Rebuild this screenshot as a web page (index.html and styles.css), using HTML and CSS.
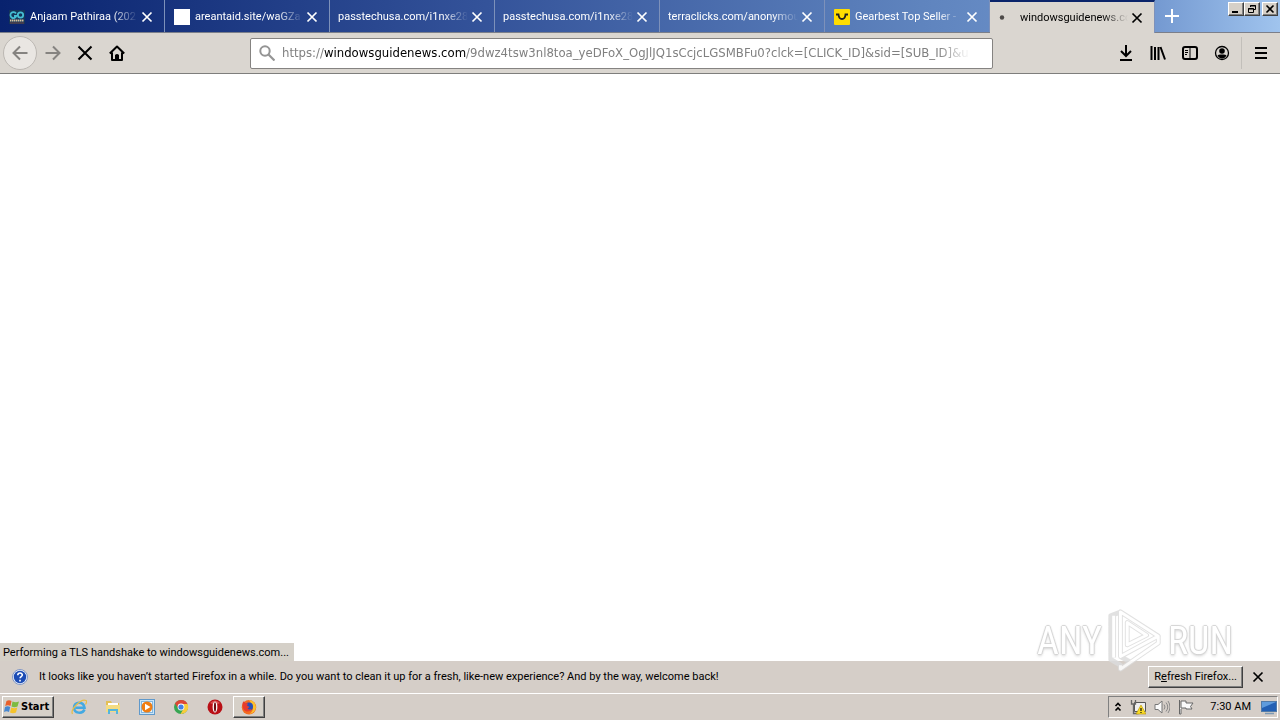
FILE: index.html
```html
<!DOCTYPE html>
<html lang="en">
<head>
<meta charset="utf-8">
<title>windowsguidenews.com</title>
<link rel="stylesheet" href="styles.css">
</head>
<body>
<svg class="defs" aria-hidden="true">
  <symbol id="x" viewBox="0 0 12 12"><path d="M1.500 1.500l9 9M10.500 1.500l-9 9" fill="none" stroke="currentColor" stroke-width="1.700"/></symbol>
</svg>
<header class="tabbar">
  <div class="tab">
    <svg class="favicon" viewBox="0 0 16 16"><rect y="1" width="16" height="14" fill="#143458"/><path d="M7 4.500A3 3 0 1 0 7.300 7H5" fill="none" stroke="#45bdd2" stroke-width="1.800"/><circle cx="11.500" cy="6" r="2.700" fill="none" stroke="#45bdd2" stroke-width="1.800"/><path d="M1 11.500h14" stroke="#d8c2a0" stroke-width="2" stroke-dasharray="1.500 .5"/><path d="M1 14h14" stroke="#704444"/></svg>
    <span class="tab-title">Anjaam Pathiraa (202</span>
    <button class="tab-close" aria-label="Close tab"><svg><use href="#x"/></svg></button>
  </div>
  <div class="tab">
    <svg class="favicon" viewBox="0 0 16 16"><rect width="16" height="16" fill="#fff"/></svg>
    <span class="tab-title">areantaid.site/waGZa</span>
    <button class="tab-close" aria-label="Close tab"><svg><use href="#x"/></svg></button>
  </div>
  <div class="tab">
    <span class="tab-title">passtechusa.com/i1nxe28</span>
    <button class="tab-close" aria-label="Close tab"><svg><use href="#x"/></svg></button>
  </div>
  <div class="tab">
    <span class="tab-title">passtechusa.com/i1nxe28</span>
    <button class="tab-close" aria-label="Close tab"><svg><use href="#x"/></svg></button>
  </div>
  <div class="tab">
    <span class="tab-title">terraclicks.com/anonymou</span>
    <button class="tab-close" aria-label="Close tab"><svg><use href="#x"/></svg></button>
  </div>
  <div class="tab">
    <svg class="favicon" viewBox="0 0 16 16"><rect width="16" height="16" rx="1" fill="#fd0"/><path d="M2 5.500h2.500C5 11.500 11 11.500 11.500 5.500H14" fill="none" stroke="#222" stroke-width="1.800"/></svg>
    <span class="tab-title">Gearbest Top Seller -</span>
    <button class="tab-close" aria-label="Close tab"><svg><use href="#x"/></svg></button>
  </div>
  <div class="tab active">
    <svg class="favicon" viewBox="0 0 16 16"><circle cx="3" cy="7.500" r="2.200" fill="#4d4a48"/></svg>
    <span class="tab-title">windowsguidenews.co</span>
    <button class="tab-close" aria-label="Close tab"><svg><use href="#x"/></svg></button>
  </div>
  <button class="new-tab" aria-label="New tab"><svg viewBox="0 0 14 14"><path d="M7 0v14M0 7h14" stroke="#fff" stroke-width="2"/></svg></button>
  <div class="window-buttons">
    <button aria-label="Minimize"><svg viewBox="0 0 12 10"><path d="M2 8h6" stroke="#000" stroke-width="2"/></svg></button>
    <button aria-label="Restore"><svg viewBox="0 0 12 10"><path d="M4.500 3V1.500h5v4H8M4 2h6M2.500 4.500h5v4h-5zM2 5h6" fill="none" stroke="#000"/></svg></button>
    <button class="close" aria-label="Close"><svg viewBox="0 0 12 10"><path d="M2.500 1.500l7 7M9.500 1.500l-7 7" stroke="#000" stroke-width="1.600"/></svg></button>
  </div>
</header>
<nav class="toolbar">
  <button class="back" aria-label="Back"><svg viewBox="0 0 16 16"><path d="M15.500 8H1.500M8 1.500L1.500 8 8 14.500" fill="none" stroke="#858380" stroke-width="2"/></svg></button>
  <button class="tool" aria-label="Forward"><svg viewBox="0 0 16 16"><path d="M.5 8h14M8 1.500L14.500 8 8 14.500" fill="none" stroke="#858380" stroke-width="2"/></svg></button>
  <button class="tool" aria-label="Stop"><svg viewBox="0 0 16 16"><path d="M1.500 1.500l13 13M14.500 1.500l-13 13" stroke="#000" stroke-width="2"/></svg></button>
  <button class="tool" aria-label="Home"><svg viewBox="0 0 16 16"><path d="M.8 8.500L8 1.500l7.200 7M3 7.500V15h10V7.500" fill="none" stroke="#000" stroke-width="2" stroke-linejoin="round"/><path d="M6 15v-5q2-2 4 0v5z"/></svg></button>
  <div class="urlbar" role="textbox" aria-label="Address" contenteditable="true" spellcheck="false">
    <svg viewBox="0 0 16 16"><circle cx="6" cy="6" r="4.700" fill="none" stroke="#949494" stroke-width="2"/><path d="M9.500 9.500l6 6" stroke="#949494" stroke-width="2.200"/></svg>
    <span class="url">https://<b>windowsguidenews.com</b>/9dwz4tsw3nl8toa_yeDFoX_OgJlJQ1sCcjcLGSMBFu0?clck=[CLICK_ID]&amp;sid=[SUB_ID]&amp;u</span>
  </div>
  <button class="tool" aria-label="Downloads"><svg viewBox="0 0 16 16"><path d="M8 0v11M3 6l5 5 5-5M2 15h12" fill="none" stroke="#000" stroke-width="2"/></svg></button>
  <button class="tool" aria-label="Library"><svg viewBox="0 0 16 16"><path d="M1.500 1v14M5 2v13M8.500 2v13M10.500 2L15 14.500" stroke="#000" stroke-width="2"/></svg></button>
  <button class="tool" aria-label="Sidebars"><svg viewBox="0 0 16 16"><rect x="1" y="2" width="14" height="12" rx="2" fill="none" stroke="#000" stroke-width="2"/><path d="M8 2v12M3 5.500h3M3 7.500h3M3 9.500h2" stroke="#000"/></svg></button>
  <button class="tool" aria-label="Account"><svg viewBox="0 0 16 16"><circle cx="8" cy="8" r="6.500" fill="none" stroke="#000" stroke-width="1.300"/><circle cx="8" cy="6" r="2.800"/><path d="M3.500 10.500q1-1 3-1h3q2 0 3 1Q11 13.500 8 13.500T3.500 10.500"/></svg></button>
  <span class="divider"></span>
  <button class="tool menu" aria-label="Menu"><svg viewBox="0 0 16 16"><path d="M2 3h12M2 8h12M2 13h12" stroke="#000" stroke-width="2"/></svg></button>
</nav>
<main class="page">
  <div class="status" role="status">Performing a TLS handshake to windowsguidenews.com...</div>
  <div class="watermark">
    <span>ANY</span>
    <svg viewBox="0 0 58 66"><path d="M7 7v43M14 3v46l39-21zM14 3L4 7v45l10 6v4l39-27v-7M21 14v23l20-10zM14 49l9 5" fill="none" stroke="#dcdcdc" stroke-width="5" stroke-linejoin="round"/><path d="M7 7v43M14 3v46l39-21zM14 58v4l39-27v-7M21 14v23l20-10z" fill="none" stroke="#fff" stroke-width="3" stroke-linejoin="round"/></svg>
    <span>RUN</span>
  </div>
</main>
<section class="notice">
  <svg class="question" viewBox="0 0 16 16"><circle cx="8" cy="8" r="7.500" fill="#e8eefa" stroke="#8197c4"/><circle cx="8" cy="8" r="6.200" fill="#1c4cb5"/><path d="M5.800 6.200c0-3 4.600-2.800 4.500-.2 0 1.500-2.200 1.600-2.200 3.200M8 10.700v1.800" fill="none" stroke="#fff" stroke-width="1.600"/></svg>
  <p>It looks like you haven’t started Firefox in a while. Do you want to clean it up for a fresh, like-new experience? And by the way, welcome back!</p>
  <button class="refresh">R<u>e</u>fresh Firefox...</button>
  <button class="dismiss" aria-label="Dismiss"><svg><use href="#x"/></svg></button>
</section>
<footer class="taskbar">
  <button class="start"><svg viewBox="0 0 16 16"><path d="M2.500 2Q5 .5 7.500 2L6.500 7Q4 5.500 1.200 7z" fill="#e9602b"/><path d="M8.500 2.500q3 1.500 6.500 0l-1.500 5q-3 1.500-6 0z" fill="#7dbb42"/><path d="M1 8q2.500-1.500 5.200 0L5 13q-2.500-1.500-5 0z" fill="#4787d0"/><path d="M7.300 8.500q3 1.500 6 0l-1.300 5q-3 1.500-6 0z" fill="#f5c32c"/></svg>Start</button>
  <button class="task" aria-label="Internet Explorer"><svg viewBox="0 0 16 16"><path d="M13.500 10.500c-2 5-10.500 4-10.500-2s9.500-6.500 10.500.2H4.500" fill="none" stroke="#43a9e2" stroke-width="2.500"/><path d="M1.500 15C-1 11 10-1 15 1.500c1 .8.500 2.500-.5 4" fill="none" stroke="#e6bd4a" stroke-width="1.300"/></svg></button>
  <button class="task" aria-label="Explorer"><svg viewBox="0 0 16 16"><path d="M1 2h5l1 2h7v9H1z" fill="#e3bf55"/><path d="M3 4h10v2H3z" fill="#fff"/><path d="M1 6h14v7H1z" fill="#f3dc83"/><path d="M3 15v-5h10v5h-2v-3H5v3z" fill="#55b5dc"/></svg></button>
  <button class="task" aria-label="Media Player"><svg viewBox="0 0 16 16"><rect x=".5" y=".5" width="15" height="15" fill="#c9e5f8" stroke="#6099cb"/><rect x="2.500" y="2.500" width="11" height="11" fill="#eef7fc" stroke="#82b6df"/><circle cx="8" cy="8" r="5.500" fill="#ef7d13"/><path d="M6 4.800L11.500 8 6 11.200z" fill="#fff"/></svg></button>
  <button class="task" aria-label="Chrome"><svg viewBox="0 0 16 16"><circle cx="8" cy="8" r="7" fill="#37a552"/><path d="M2 4.500A7 7 0 0 1 14.500 5H8L5 9z" fill="#dd4635"/><path d="M14.500 5A7 7 0 0 1 7.500 15l3.500-6-1-4z" fill="#f8cc3b"/><circle cx="8" cy="8" r="3.400" fill="#fff"/><circle cx="8" cy="8" r="2.600" fill="#4280e5"/></svg></button>
  <button class="task" aria-label="Opera"><svg viewBox="0 0 16 16"><circle cx="8" cy="8" r="7.500" fill="#b90f16"/><path d="M3 4Q8-1 13 4q-5 3-10 0" fill="#d94b4e"/><ellipse cx="8" cy="8" rx="2.400" ry="5.600" fill="#fff"/><ellipse cx="8" cy="8" rx="1.100" ry="4.800" fill="#6d0b10"/></svg></button>
  <button class="task current" aria-label="Firefox"><svg viewBox="0 0 16 16"><circle cx="8" cy="8.300" r="7.200" fill="#f36a1f"/><path d="M8 1q7 1 7 7.500Q14 14 8.500 15q5-4 3-8T8 1" fill="#fbc02d"/><circle cx="8" cy="7.500" r="4" fill="#2650b8"/><path d="M1.500 4l1.500-2 1 2 3 .500-1 2 2.500 1.500-2 1.500q2 2 4 0-1 3.500-5 3Q1 11 1.500 4" fill="#e63c2e"/></svg></button>
  <div class="tray">
    <svg class="chevron" viewBox="0 0 8 10"><path d="M1.500 4L4 1.500 6.500 4M1.500 8.500L4 6l2.500 2.500" fill="none" stroke="#000" stroke-width="1.600"/></svg>
    <svg viewBox="0 0 16 16"><path d="M4.500 3.500h11v9h-11z" fill="#eee" stroke="#555"/><path d="M1.500 1v4h4V1M3.500 5v9.500h5" fill="none" stroke="#666" stroke-width="1.300"/><path d="M11 6l5 9H6z" fill="#f9db26" stroke="#b79200" stroke-width=".6"/><path d="M11 9v3M11 13v1" stroke="#111" stroke-width="1.200"/></svg>
    <svg viewBox="0 0 16 16"><path d="M1 5.500h3L8 2v12l-4-3.500H1z" fill="#fafafa" stroke="#777"/><path d="M10 5.500q2 2.500 0 5M12 3.500q3.500 4.500 0 9M14 2q4 6 0 12" fill="none" stroke="#888"/></svg>
    <svg viewBox="0 0 16 16"><path d="M1.500 1v14h1.500V10M3 2h5v2h7l-2.500 3.500L14 10H8V9H3z" fill="#fafafa" stroke="#666"/></svg>
    <time>7:30 AM</time>
    <svg viewBox="0 0 16 16"><rect x=".5" y="2.500" width="15" height="10" fill="#2360b4" stroke="#527ba8"/><path d="M1 3h14L1 9z" fill="#5f9cdd"/><path d="M4 14.500h9" stroke="#7c99b4" stroke-width="1.500"/></svg>
  </div>
</footer>
</body>
</html>
```

FILE: styles.css
```css
* { box-sizing: border-box; }
body {
  margin: 0;
  height: 100vh;
  display: flex;
  flex-direction: column;
  overflow: hidden;
  background: #fff;
  color: #000;
  font: 11px/16px Tahoma, Roboto, "DejaVu Sans", sans-serif;
}
button { margin: 0; padding: 0; border: 0; background: none; font: inherit; color: inherit; }
svg { display: block; flex: none; width: 16px; height: 16px; }
.defs { position: absolute; width: 0; height: 0; }

.tabbar {
  display: flex;
  height: 33px;
  flex: none;
  background: linear-gradient(90deg, #08226e 0%, #34539a 38%, #5f84be 72%, #7398d0 90%, #a0c4ee 100%);
  border-bottom: 1px solid #7b7f8a;
}
.tab {
  display: flex;
  align-items: center;
  flex: 0 1 165px;
  min-width: 76px;
  padding: 2px 9px 0 8px;
  border-right: 1px solid #7d91ba;
  color: #fff;
}
.favicon { margin: 0 5px 0 1px; }
.tab-title {
  flex: 1;
  min-width: 0;
  overflow: hidden;
  white-space: nowrap;
  -webkit-mask-image: linear-gradient(270deg, transparent, #000 26px);
  mask-image: linear-gradient(270deg, transparent, #000 26px);
}
.tab-close { display: grid; place-items: center; width: 16px; height: 16px; margin-left: 1px; }
.tab-close svg, .dismiss svg { width: 12px; height: 12px; }
.tab.active {
  margin-bottom: -1px;
  padding: 0 9px 0 8px;
  border-top: 2px solid #0a246a;
  background: #dad6d0;
  color: #000;
}
.new-tab { display: grid; place-items: center; width: 34px; }
.new-tab svg { width: 14px; height: 14px; }
.window-buttons { display: flex; margin: 2px 2px 0 auto; height: 14px; }
.window-buttons button, .refresh, .start, .task.current {
  background: #d6d0c8;
  border: 1px solid;
  border-color: #fff #404040 #404040 #fff;
  box-shadow: inset -1px -1px #808080;
}
.window-buttons button { width: 16px; display: grid; place-items: center; }
.window-buttons svg { width: 12px; height: 10px; }
.window-buttons .close { margin-left: 2px; }

.toolbar {
  display: flex;
  align-items: center;
  flex: none;
  height: 41px;
  padding: 0 3px;
  background: #dad6d0;
  border-bottom: 1px solid #7e7e7c;
}
.back {
  display: grid;
  place-items: center;
  flex: none;
  width: 34px;
  height: 34px;
  border: 1px solid #bcb8b3;
  border-radius: 50%;
  background: #e9e6e2;
}
.tool { display: grid; place-items: center; flex: none; width: 32px; height: 32px; }
.urlbar {
  display: flex;
  align-items: center;
  flex: 1;
  min-width: 0;
  height: 31px;
  margin: 0 117px;
  padding: 0 22px 0 8px;
  border: 1px solid #858381;
  border-radius: 2px;
  background: #fff;
  color: #808080;
  font-family: Tahoma, "DejaVu Sans Condensed", "DejaVu Sans", sans-serif;
  font-size: 13px;
}
.url {
  flex: 1;
  min-width: 0;
  margin-left: 7px;
  overflow: hidden;
  white-space: nowrap;
  -webkit-mask-image: linear-gradient(270deg, transparent, #000 32px);
  mask-image: linear-gradient(270deg, transparent, #000 32px);
}
.url b { font-weight: normal; color: #000; }
.divider { flex: none; width: 1px; height: 32px; margin: 0 3px; background: #c2bfba; }

.page { position: relative; flex: 1; background: #fff; }
.status {
  position: absolute;
  left: 0;
  bottom: 0;
  padding: 2px 5px 0 3px;
  background: #d5d0c8;
}
.watermark {
  position: absolute;
  z-index: 1;
  right: 47px;
  bottom: -12px;
  display: flex;
  align-items: center;
  gap: 4px;
  color: #fff;
  font: 38px/40px "Liberation Sans Narrow", "Roboto Condensed", "Liberation Sans", sans-serif;
  text-shadow: 1px 0 1px #ccc, -1px 0 1px #ccc, 0 1px 1px #ccc, 0 -1px 1px #ccc, 0 2px 3px #ccc;
  opacity: .85;
}
.watermark svg { width: 58px; height: 64px; }

.notice {
  display: flex;
  align-items: center;
  flex: none;
  height: 32px;
  padding: 0 14px 0 12px;
  background: #d5cec8;
}
.notice p { flex: 1; margin: 0 0 0 11px; }
.refresh { height: 22px; padding: 0 5px; margin-right: 7px; }
.dismiss { display: grid; place-items: center; width: 16px; height: 16px; }

.taskbar {
  display: flex;
  align-items: center;
  flex: none;
  height: 27px;
  padding: 0 2px;
  border-top: 1px solid #fff;
  background: #d5cec8;
}
.start {
  display: flex;
  align-items: center;
  gap: 1px;
  height: 22px;
  width: 52px;
  padding: 0 1px;
  font-family: Tahoma, "DejaVu Sans Condensed", "DejaVu Sans", sans-serif;
  font-weight: bold;
}
.task { display: grid; place-items: center; width: 32px; height: 22px; margin-left: 2px; }
.start + .task { margin-left: 9px; }
.tray {
  display: flex;
  align-items: center;
  gap: 8px;
  height: 22px;
  margin-left: auto;
  padding: 0 0 0 5px;
  border: 1px solid;
  border-color: #808080 #fff #fff #808080;
}
.tray .chevron { width: 8px; height: 10px; }
.tray time { margin: 0 2px 0 8px; }
```
